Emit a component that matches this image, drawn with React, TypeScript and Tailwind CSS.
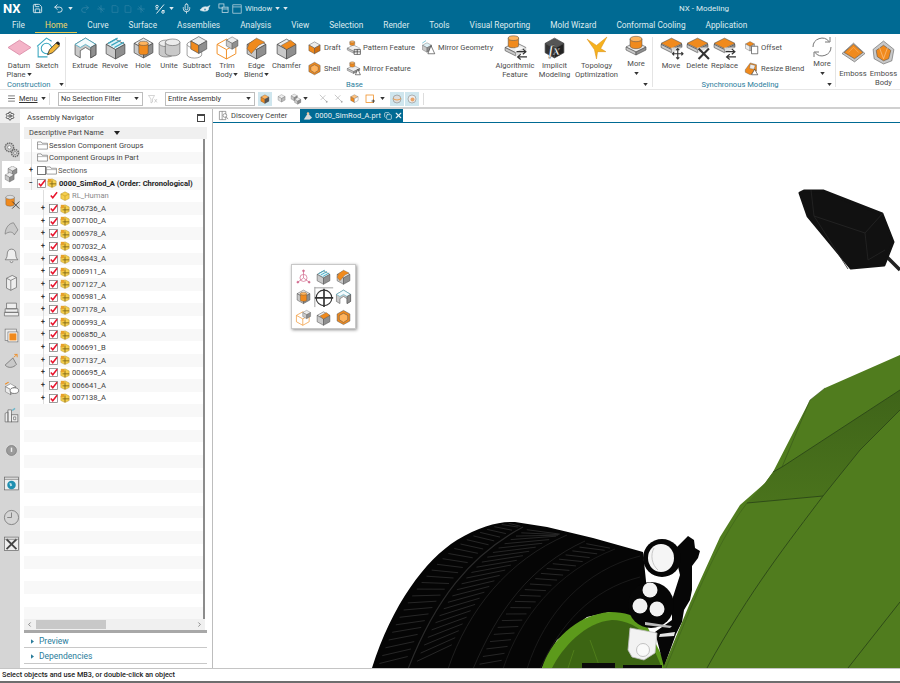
import type { ReactNode } from 'react';
import { Save, Undo2, Redo2, Mic, Menu, Settings, X, Copy, ChevronLeft, ChevronRight } from 'lucide-react';

const O = '#f08a1d';
const G = '#c9c9c9';
const D = '#8f8f8f';
const L = '#ececec';
const E = '#4a4a4a';

// little iso primitives, all in a 24 box
const Cube = ({ t = L, l = G, r = D, x = 0, y = 0, s = 1 }: { t?: string; l?: string; r?: string; x?: number; y?: number; s?: number }) => (
    <g transform={`translate(${x} ${y}) scale(${s})`} stroke={E} strokeWidth={0.7} strokeLinejoin="round">
        <polygon points="12,3 21,8 12,13 3,8" fill={t} />
        <polygon points="3,8 12,13 12,22 3,17" fill={l} />
        <polygon points="12,13 21,8 21,17 12,22" fill={r} />
    </g>
);

const Cyl = ({ cx = 12, cy = 6, rx = 5, h = 6, fill = O, top = '#ffb35c' }: { cx?: number; cy?: number; rx?: number; h?: number; fill?: string; top?: string }) => (
    <g stroke={E} strokeWidth={0.5}>
        <path d={`M${cx - rx} ${cy}v${h}a${rx} ${rx * 0.45} 0 0 0 ${rx * 2} 0v${-h}z`} fill={fill} />
        <ellipse cx={cx} cy={cy} rx={rx} ry={rx * 0.45} fill={top} />
    </g>
);

const Slab = ({ y = 12 }: { y?: number }) => (
    <g stroke={E} strokeWidth={0.6}>
        <polygon points={`12,${y - 4} 22,${y + 1} 12,${y + 6} 2,${y + 1}`} fill={L} />
        <polygon points={`2,${y + 1} 12,${y + 6} 12,${y + 9} 2,${y + 4}`} fill={G} />
        <polygon points={`22,${y + 1} 12,${y + 6} 12,${y + 9} 22,${y + 4}`} fill={D} />
    </g>
);

const Badge = ({ kind }: { kind: 'move' | 'x' | 'swap' | 'plus' }) => (
    <g transform="translate(13 13)" stroke="#333" strokeWidth={1.1} fill="none">
        <rect x={-1} y={-1} width={12} height={12} fill="#fff" stroke="none" opacity={0.7} />
        {kind === 'move' && <path d="M5 0v10M0 5h10M3.5 1.5 5 0l1.5 1.5M3.5 8.5 5 10l1.5-1.5M1.5 3.5 0 5l1.5 1.5M8.5 3.5 10 5 8.5 6.5" />}
        {kind === 'x' && <path d="M0 0 10 10M10 0 0 10" strokeWidth={2} />}
        {kind === 'swap' && <path d="M0 3h9M6 0.5 9 3 6 5.5M10 8H1M4 5.5 1 8l3 2.500" />}
        {kind === 'plus' && <path d="M0 2h10v8H0zM5 2v8M0 6h10" />}
    </g>
);

const shapes: Record<string, ReactNode> = {
    datum: <polygon points="1,12 12,5 23,12 12,19" fill="#f4b4c8" stroke="#d987a3" strokeWidth={0.8} />,
    sketch: (
        <g fill="none">
            <path d="M2 11 11 3l5 3M3 11v10h9" stroke="#39a6bf" strokeWidth={1} />
            <circle cx={11} cy={13} r={5} stroke="#39a6bf" strokeWidth={1} />
            <path d="m12 19 2-5 7-7 3 3-7 7z" fill="#f2b63a" stroke="#333" strokeWidth={0.8} />
            <path d="m20 8 2-2 2 2-1 2z" fill="#222" />
        </g>
    ),
    extrude: (
        <g stroke={E} strokeWidth={0.7} strokeLinejoin="round">
            <polygon points="2,9 12,3 22,9 22,19 17,22 17,15 12,12 7,15 7,22 2,19" fill={G} />
            <path d="M2 9 12 3 22 9 17 12 12 9 7 12Z" fill="#f4fbfd" stroke="#3aa6bf" />
            <polygon points="17,12 22,9 22,19 17,22" fill={D} />
        </g>
    ),
    revolve: (
        <g>
            <Cube t="#dff2f7" y={1} />
            <path d="M5 8 14 3M8 10 17 5M11 12 20 7" stroke="#3aa6bf" strokeWidth={1.2} />
        </g>
    ),
    hole: (
        <g>
            <Cube />
            <Cyl cy={8} rx={4.500} h={9} />
        </g>
    ),
    unite: (
        <g>
            <Cyl cx={9} cy={8} rx={7} h={10} fill={G} top={L} />
            <Cyl cx={15} cy={7} rx={7} h={10} fill={G} top={L} />
        </g>
    ),
    subtract: (
        <g>
            <Cyl cx={9} cy={9} rx={7} h={10} fill="#fff" top="#fff" />
            <Cube t={L} l={O} r={D} x={3} y={-1} s={0.85} />
        </g>
    ),
    trim: (
        <g>
            <path d="M2 9 11 4l9 5v9l-9 5-9-5zM2 9l9 5 9-5M11 14v9" stroke={O} strokeWidth={0.9} fill="none" />
            <Cube x={9} y={0} s={0.62} />
        </g>
    ),
    blend: (
        <g>
            <Cube r={D} l={G} t={L} y={1} />
            <path d="M3 13 5 8l7-5 8 4-6 3-7 8z" fill={O} stroke={E} strokeWidth={0.4} />
        </g>
    ),
    chamfer: (
        <g>
            <Cube y={1} />
            <polygon points="12,14 21,9 16,5 7,10" fill={O} stroke={E} strokeWidth={0.4} />
        </g>
    ),
    draft: <Cube t={L} l={O} r="#d06f10" />,
    shell: (
        <g stroke={E} strokeWidth={0.7}>
            <polygon points="12,2 21,7 21,17 12,22 3,17 3,7" fill={O} />
            <polygon points="12,6 18,9 18,15 12,19 6,15 6,9" fill="#ffb35c" />
        </g>
    ),
    pattern: (
        <g>
            <Slab y={12} />
            <Cyl cx={10} cy={3} rx={4} h={4} />
            <Badge kind="plus" />
        </g>
    ),
    mirrorF: (
        <g>
            <Slab y={11} />
            <Cyl cx={10} cy={3} rx={4} h={5} />
            <path d="M15 22l4-9 4 9z" fill="#fff" stroke="#333" strokeWidth={1} />
        </g>
    ),
    mirrorG: (
        <g>
            <Cube t="#dff2f7" s={0.8} y={2} />
            <path d="M11 22l5-13 6 13z" fill="#fff" stroke="#333" strokeWidth={1} />
            <path d="M2 5 8 1" stroke="#3aa6bf" strokeWidth={1} />
        </g>
    ),
    algo: (
        <g>
            <Slab y={11} />
            <Cyl cx={10} cy={3} rx={5} h={7} />
            <Badge kind="swap" />
        </g>
    ),
    implicit: (
        <g>
            <Cube t="#555" l="#333" r="#222" />
            <text x={12} y={19} textAnchor="middle" fontFamily="Liberation Serif, serif" fontStyle="italic" fontWeight={700} fontSize={13} fill="#fff" stroke="#000" strokeWidth={0.3}>
                fx
            </text>
        </g>
    ),
    topo: <path d="M3 4 12 10 22 2 16 13 21 16 13 16 12 23 10 14Z" fill="#f6b21d" stroke="#d98c12" strokeWidth={0.5} />,
    more: (
        <g>
            <Slab y={11} />
            <Cyl cx={12} cy={4} rx={6} h={7} />
        </g>
    ),
    move: (
        <g>
            <Slab y={8} />
            <polygon points="12,3 22,8 12,13 2,8" fill={O} stroke={E} strokeWidth={0.5} />
            <Badge kind="move" />
        </g>
    ),
    del: (
        <g>
            <Slab y={8} />
            <polygon points="12,3 22,8 12,13 2,8" fill={O} stroke={E} strokeWidth={0.5} />
            <Badge kind="x" />
        </g>
    ),
    replace: (
        <g>
            <Slab y={8} />
            <polygon points="12,3 22,8 12,13 2,8" fill={O} stroke={E} strokeWidth={0.5} />
            <Badge kind="swap" />
        </g>
    ),
    offset: (
        <g>
            <Cube t={O} l={L} r={G} s={0.8} />
            <path d="M12 10h10v12H12z" fill="#fff" stroke="#333" strokeWidth={1} />
        </g>
    ),
    resize: (
        <g>
            <polygon points="2,14 10,3 20,6 20,16 10,22 2,18" fill={O} stroke={E} strokeWidth={0.6} />
            <polygon points="10,5 18,7 16,13 9,12" fill={L} stroke={E} strokeWidth={0.5} />
            <path d="M12 22l5-9 5 9z" fill="#fff" stroke="#333" strokeWidth={1} />
        </g>
    ),
    sync: (
        <g fill="none" stroke="#777" strokeWidth={1}>
            <path d="M3 12a9 9 0 0 1 16-5.500M21 12a9 9 0 0 1-16 5.500" />
            <path d="M20 2v5h-5M4 22v-5h5" />
        </g>
    ),
    emboss: (
        <g stroke={E} strokeWidth={0.5}>
            <polygon points="1,13 12,3 23,13 13,21" fill={G} />
            <polygon points="3,12 12,4 21,12 13,18" fill={O} />
            <path d="M7 12 12 7l5 5" stroke="#ffc27e" fill="none" />
        </g>
    ),
    embossB: (
        <g stroke={E} strokeWidth={0.5}>
            <polygon points="12,1 22,9 20,20 12,23 3,18 2,9" fill={G} />
            <polygon points="12,5 19,10 17,18 12,20 6,16 5,10" fill={O} />
            <path d="M8 7l4 11 4-11" stroke="#ffd9ae" fill="none" />
        </g>
    ),
    tripod: (
        <g fill="none" stroke="#d26a8e" strokeWidth={1}>
            <circle cx={12} cy={14} r={5} />
            <path d="M12 14V4M12 14l-8 6M12 14l8 6" />
            <circle cx={12} cy={4} r={1.300} fill="#d26a8e" />
            <circle cx={4} cy={20} r={1.300} fill="#d26a8e" />
            <circle cx={20} cy={20} r={1.300} fill="#d26a8e" />
        </g>
    ),
    target: (
        <g fill="none" stroke="#333">
            <path d="M2 1v22M2 2h20" stroke="#999" strokeWidth={1} />
            <circle cx={12} cy={13} r={8.500} strokeWidth={1.200} />
            <path d="M12 3v20M2 13h20" strokeWidth={1.800} />
        </g>
    ),
    gears: (
        <g fill={G} stroke="#666" strokeWidth={0.9}>
            <circle cx={9} cy={9} r={6} strokeDasharray="2 1" strokeWidth={2} />
            <circle cx={9} cy={9} r={2.500} fill="#fff" />
            <circle cx={17} cy={17} r={5} strokeDasharray="2 1" strokeWidth={2} />
            <circle cx={17} cy={17} r={2} fill="#fff" />
        </g>
    ),
    part: (
        <g>
            <Cube t={L} l={G} r={D} x={5} y={-2} s={0.7} />
            <Cube t={L} l={G} r={D} x={1} y={7} s={0.7} />
        </g>
    ),
    partX: (
        <g>
            <Cyl cx={10} cy={6} rx={6} h={10} fill={O} top="#ddd" />
            <path d="M13 12 23 22M23 12 13 22" stroke="#333" strokeWidth={1.200} />
        </g>
    ),
    surface: <path d="M3 20c0-9 6-16 12-16l6 10-5 7c-2-5-8-5-13-1z" fill={G} stroke="#666" strokeWidth={0.8} />,
    bell: <path d="M12 3c-4 0-6 3-6 7 0 5-2 7-3 8h18c-1-1-3-3-3-8 0-4-2-7-6-7zM10 20a2 2 0 0 0 4 0" fill="#eee" stroke="#666" strokeWidth={1} />,
    book: <path d="M5 6l8-4 6 3v14l-8 4-6-3zM5 6l6 3v14M11 9l8-4" fill="#eee" stroke="#666" strokeWidth={1} />,
    printer: <path d="M5 3h14v8H5zM3 11h18v5H3zM2 16h20v5H2z" fill="#eee" stroke="#666" strokeWidth={1} />,
    layer: (
        <g>
            <rect x={3} y={3} width={16} height={16} fill="#eee" stroke="#777" />
            <rect x={7} y={7} width={14} height={14} fill="#fff" stroke="#777" />
            <rect x={9} y={9} width={10} height={10} fill={O} />
        </g>
    ),
    cone: (
        <g>
            <path d="M3 17 14 7l5 9c-4 5-12 6-16 1z" fill={G} stroke="#666" />
            <path d="M15 6l5-4M20 2v4M20 2h-4" stroke={O} strokeWidth={1.200} fill="none" />
        </g>
    ),
    eyeCube: (
        <g>
            <Cube t="#fff" l={L} r={G} x={1} y={3} s={0.8} />
            <ellipse cx={16} cy={15} rx={6} ry={4} fill="#fff" stroke="#555" />
            <path d="M3 6l5-3" stroke={O} strokeWidth={1.500} />
        </g>
    ),
    house: (
        <g fill="#eee" stroke="#666" strokeWidth={1}>
            <path d="M3 21V9l4-2v14zM7 21V4h5v17z" />
            <rect x={12} y={11} width={9} height={10} />
            <path d="M15 14h3v4h-3z" fill="#fff" />
            <path d="M13 5l4-3" stroke="#6ab7cc" strokeWidth={2} />
        </g>
    ),
    radar: (
        <g>
            <circle cx={12} cy={12} r={7} fill="#9b9b9b" stroke="#777" />
            <path d="M12 8v6" stroke="#eee" strokeWidth={2} />
            <path d="M7 3a12 12 0 0 1 12 3" fill="none" stroke="#ddd" />
        </g>
    ),
    globe: (
        <g>
            <rect x={2} y={3} width={20} height={18} fill="#eee" stroke="#666" />
            <path d="M2 6h20" stroke="#666" />
            <circle cx={12} cy={14} r={6} fill="#1f8fb0" />
            <path d="M9 11l3 1 1 3-3 1z" fill="#b8e0ea" />
        </g>
    ),
    clock: (
        <g fill="none" stroke="#777" strokeWidth={1.200}>
            <circle cx={12} cy={12} r={10} />
            <path d="M12 5v7H6" />
        </g>
    ),
    tools: (
        <g>
            <rect x={2} y={3} width={20} height={19} fill="#eee" stroke="#666" />
            <path d="M5 6 19 20M19 6 5 20" stroke="#444" strokeWidth={2.500} />
            <path d="M2 6h20" stroke="#666" />
        </g>
    ),
    filter: <path d="M3 5h12l-4 7v6l-3 2v-8zM15 12l5 7M20 12l-5 7" fill="none" stroke="#aaa" strokeWidth={1} />,
    select: <Cube t="#ffb35c" l={O} r="#555" s={0.9} x={1} y={1} />,
    faint: <Cube t="#eee" l="#ddd" r="#bbb" s={0.85} x={2} y={1} />,
    faintX: (
        <g fill="none" stroke="#c4c4c4" strokeWidth={2}>
            <path d="M4 4 18 18M16 5 6 15" />
            <circle cx={19} cy={19} r={2} fill="#aaa" stroke="none" />
        </g>
    ),
    stack: (
        <g>
            <Cube t="#eee" l={G} r={D} s={0.7} x={0} y={0} />
            <Cube t="#eee" l={G} r={D} s={0.7} x={7} y={7} />
        </g>
    ),
    orangeC: <Cube t="#ffc27e" l={O} r="#fff" s={0.9} x={1} y={1} />,
    square: (
        <g>
            <rect x={4} y={4} width={15} height={15} fill="#fff" stroke={O} strokeWidth={1.500} />
            <path d="M15 16h7M18.500 13v7" stroke="#333" strokeWidth={1.600} />
        </g>
    ),
    sphere: (
        <g>
            <circle cx={12} cy={12} r={8} fill="#ddd" stroke="#777" />
            <path d="M4 11c5 4 11 4 16 0" fill="none" stroke={O} strokeWidth={1.500} />
        </g>
    ),
    sphere2: (
        <g>
            <circle cx={12} cy={12} r={8} fill="#eee" stroke="#777" />
            <circle cx={13} cy={13} r={4} fill="#e9a469" />
        </g>
    ),
    eye: <path d="M2 14c4-6 10-8 14-6l6-3-3 5c1 3-1 6-5 6-5 1-9 0-12-2zM12 11a2 2 0 1 0 .1 0z" fill="#dfeaef" stroke="#dfeaef" fillRule="evenodd" />,
    percent: (
        <g fill="none" stroke="#dfeaef" strokeWidth={2}>
            <path d="M5 21 20 3M3 12h5M16 15h5" />
            <circle cx={6} cy={7} r={2.500} />
            <circle cx={18} cy={18} r={2.500} />
        </g>
    ),
    ghostBox: <path d="M5 4h10l4 4v12H5z" fill="none" stroke="#2f83a6" strokeWidth={1.600} />,
    ghostPlus: <path d="M12 3v18M3 12h18M6 6l12 12" stroke="#2f83a6" strokeWidth={1.800} fill="none" />,
    windows: (
        <g fill="none" stroke="#dfeaef" strokeWidth={1.500}>
            <rect x={2} y={2} width={11} height={9} />
            <rect x={9} y={9} width={13} height={12} fill="#006a93" />
            <path d="M9 13h13" />
        </g>
    ),
    window: (
        <g fill="none" stroke="#dfeaef" strokeWidth={1.500}>
            <rect x={2} y={2} width={20} height={20} />
            <path d="M2 7h20" />
        </g>
    ),
    discovery: (
        <g fill="none" stroke="#666" strokeWidth={1.300}>
            <path d="M3 3h14v18H3zM9 3v18" />
            <circle cx={15} cy={12} r={4} fill="#fff" />
            <path d="M18 15l4 5" />
        </g>
    ),
    tabPart: (
        <g>
            <path d="M3 20 12 6l9 10-5 4z" fill="#d8d8d8" stroke="#fff" />
            <circle cx={12} cy={6} r={3} fill="#f3c69a" />
        </g>
    ),
};

const Ico = ({ n, className = 'w-6 h-6' }: { n: string; className?: string }) => (
    <svg viewBox="0 0 24 24" className={`${className} shrink-0`}>
        {shapes[n]}
    </svg>
);

const Caret = ({ color = '#333', className = '' }: { color?: string; className?: string }) => (
    <svg viewBox="0 0 6 4" className={`w-[5px] h-[3px] shrink-0 ${className}`}>
        <path d="M0 0h6L3 4z" fill={color} />
    </svg>
);

const Big = ({ n, lines, w, caret, low }: { n: string; lines: string[]; w: string; caret?: boolean; low?: boolean }) => (
    <div className={`${w} flex flex-col items-center shrink-0 ${low ? 'pt-[6px]' : 'pt-[1px]'}`}>
        <Ico n={n} className="w-[25px] h-[25px]" />
        <div className={`${low ? 'mt-[5px]' : 'mt-[2px]'} text-center leading-[8.500px] whitespace-nowrap`}>
            {lines.map((l, i) => (
                <div key={l} className="flex items-center justify-center gap-[1px]">
                    {l}
                    {caret && i === lines.length - 1 && <Caret />}
                </div>
            ))}
        </div>
    </div>
);

const More = ({ n, w }: { n: string; w: string }) => (
    <div className={`${w} flex flex-col items-center pt-[1px] shrink-0`}>
        <Ico n={n} className="w-[24px] h-[24px]" />
        <div className="leading-[8.500px] mt-[1px]">More</div>
        <Caret className="mt-[3px]" />
    </div>
);

const Small = ({ n, label }: { n: string; label: string }) => (
    <div className="flex items-center gap-[2px] h-[15px] whitespace-nowrap">
        <Ico n={n} className="w-[15px] h-[15px]" />
        {label}
    </div>
);

const Sep = () => <div className="w-px h-[50px] mt-[3px] bg-[#e4e4e4] shrink-0" />;

const GroupLabel = ({ text, className = '' }: { text: string; className?: string }) => (
    <div className={`h-[10px] pt-[1px] flex items-center justify-center text-[#2b7d9c] leading-none ${className}`}>
        {text}
    </div>
);

const Ribbon = () => (
    <div className="h-[55px] flex bg-white text-[7.600px] text-[#4c4c4c]">
        <div className="w-[65px] shrink-0 flex flex-col">
            <div className="h-[45px] flex pl-[5px]">
                <Big n="datum" lines={['Datum', 'Plane']} w="w-[28px]" caret />
                <Big n="sketch" lines={['Sketch']} w="w-[28px]" />
            </div>
            <div className="flex items-center pl-[7px] gap-[9px]">
                <GroupLabel text="Construction" />
                <Caret />
            </div>
        </div>
        <Sep />
        <div className="w-[586px] shrink-0 flex flex-col">
            <div className="h-[45px] flex pl-[4px]">
                <Big n="extrude" lines={['Extrude']} w="w-[30px]" />
                <Big n="revolve" lines={['Revolve']} w="w-[30px]" />
                <Big n="hole" lines={['Hole']} w="w-[26px]" />
                <Big n="unite" lines={['Unite']} w="w-[26px]" />
                <Big n="subtract" lines={['Subtract']} w="w-[30px]" />
                <Big n="trim" lines={['Trim', 'Body']} w="w-[30px]" caret />
                <Big n="blend" lines={['Edge', 'Blend']} w="w-[29px]" caret />
                <Big n="chamfer" lines={['Chamfer']} w="w-[31px]" />
                <div className="w-[44px] shrink-0 pl-[5px] pt-[6px] flex flex-col gap-[6px]">
                    <Small n="draft" label="Draft" />
                    <Small n="shell" label="Shell" />
                </div>
                <div className="w-[75px] shrink-0 pt-[6px] flex flex-col gap-[6px]">
                    <Small n="pattern" label="Pattern Feature" />
                    <Small n="mirrorF" label="Mirror Feature" />
                </div>
                <div className="w-[73px] shrink-0 pt-[6px]">
                    <Small n="mirrorG" label="Mirror Geometry" />
                </div>
                <Big n="algo" lines={['Algorithmic', 'Feature']} w="w-[42px]" />
                <Big n="implicit" lines={['Implicit', 'Modeling']} w="w-[37px]" />
                <Big n="topo" lines={['Topology', 'Optimization']} w="w-[47px]" />
                <More n="more" w="w-[32px]" />
            </div>
            <div className="flex items-center">
                <GroupLabel text="Base" className="w-[577px]" />
                <Caret />
            </div>
        </div>
        <Sep />
        <div className="w-[182px] shrink-0 flex flex-col">
            <div className="h-[45px] flex pl-[5px]">
                <Big n="move" lines={['Move']} w="w-[26px]" />
                <Big n="del" lines={['Delete']} w="w-[26px]" />
                <Big n="replace" lines={['Replace']} w="w-[29px]" />
                <div className="w-[71px] shrink-0 pl-[5px] pt-[6px] flex flex-col gap-[6px]">
                    <Small n="offset" label="Offset" />
                    <Small n="resize" label="Resize Blend" />
                </div>
                <More n="sync" w="w-[24px]" />
            </div>
            <div className="flex items-center">
                <GroupLabel text="Synchronous Modeling" className="w-[174px]" />
                <Caret />
            </div>
        </div>
        <Sep />
        <div className="flex pl-[2px]">
            <Big n="emboss" lines={['Emboss']} w="w-[30px]" low />
            <Big n="embossB" lines={['Emboss', 'Body']} w="w-[31px]" low />
        </div>
    </div>
);

const menuTabs = ['File', 'Home', 'Curve', 'Surface', 'Assemblies', 'Analysis', 'View', 'Selection', 'Render', 'Tools', 'Visual Reporting', 'Mold Wizard', 'Conformal Cooling', 'Application'];

const TitleBar = () => (
    <div className="bg-[#006a93] text-[#dfeaef]">
        <div className="h-[17px] flex items-center relative">
            <span className="ml-[3px] w-[27px] text-[13px] font-bold text-white leading-none">NX</span>
            <Save size={11} className="ml-[2px]" />
            <Undo2 size={11} className="ml-[10px]" />
            <Caret color="#dfeaef" className="ml-[4px]" />
            <Redo2 size={10} className="ml-[7px] text-[#2f83a6]" />
            <Ico n="ghostPlus" className="w-[10px] h-[10px] ml-[6px]" />
            <Ico n="ghostBox" className="w-[10px] h-[10px] ml-[4px]" />
            <Ico n="ghostBox" className="w-[10px] h-[10px] ml-[3px]" />
            <Ico n="ghostPlus" className="w-[10px] h-[10px] ml-[3px]" />
            <Ico n="percent" className="w-[12px] h-[12px] ml-[8px]" />
            <Caret color="#dfeaef" className="ml-[3px]" />
            <Mic size={11} className="ml-[7px]" />
            <Ico n="eye" className="w-[12px] h-[12px] ml-[7px]" />
            <Ico n="windows" className="w-[11px] h-[11px] ml-[7px]" />
            <Ico n="window" className="w-[10px] h-[10px] ml-[3px]" />
            <span className="ml-[3px] text-[7.600px]">Window</span>
            <Caret color="#dfeaef" className="ml-[3px]" />
            <Caret color="#dfeaef" className="ml-[3px]" />
            <span className="absolute left-[679px] text-[8px]">NX - Modeling</span>
        </div>
        <div className="h-[17px] flex items-center gap-[20px] pl-[12px] text-[8.300px]">
            {menuTabs.map((t) =>
                t === 'Home' ? (
                    <span key={t} className="relative text-[#f3d66a]">
                        {t}
                        <span className="absolute -left-[10px] -right-[10px] top-[13px] h-px bg-[#e9c84e]" />
                    </span>
                ) : (
                    <span key={t}>{t}</span>
                ),
            )}
        </div>
    </div>
);

const Select = ({ label, w, ml }: { label: string; w: string; ml: string }) => (
    <div className={`${w} ${ml} h-[14px] border border-[#bdbdbd] bg-white flex items-center justify-between pl-[2px] pr-[3px]`}>
        {label}
        <Caret />
    </div>
);

const Toolbar = () => (
    <div className="h-[17px] bg-white flex items-center text-[7.400px] text-[#333]">
        <div className="w-[49px] shrink-0 flex items-center">
            <Menu size={9} className="ml-[7px] text-[#555]" />
            <span className="ml-[3px] underline underline-offset-1">Menu</span>
            <Caret className="ml-[3px]" />
        </div>
        <div className="w-px h-[12px] bg-[#ddd]" />
        <Select label="No Selection Filter" w="w-[85px]" ml="ml-[8px]" />
        <Ico n="filter" className="w-[12px] h-[12px] ml-[4px]" />
        <Select label="Entire Assembly" w="w-[90px]" ml="ml-[6px]" />
        <div className="ml-[3px] w-[14px] h-[14px] bg-[#cfe6ee] flex items-center justify-center">
            <Ico n="select" className="w-[12px] h-[12px]" />
        </div>
        <Ico n="faint" className="w-[11px] h-[11px] ml-[4px]" />
        <Ico n="stack" className="w-[12px] h-[12px] ml-[3px]" />
        <Caret className="ml-[1px]" />
        <Ico n="faintX" className="w-[11px] h-[11px] ml-[10px]" />
        <Ico n="faintX" className="w-[11px] h-[11px] ml-[4px]" />
        <Ico n="orangeC" className="w-[11px] h-[11px] ml-[5px]" />
        <Ico n="square" className="w-[12px] h-[12px] ml-[4px]" />
        <Caret className="ml-[4px]" />
        <div className="ml-[5px] w-[14px] h-[14px] bg-[#cfe6ee] flex items-center justify-center">
            <Ico n="sphere" className="w-[12px] h-[12px]" />
        </div>
        <div className="ml-[1px] w-[14px] h-[14px] bg-[#cfe6ee] flex items-center justify-center">
            <Ico n="sphere2" className="w-[12px] h-[12px]" />
        </div>
        <div className="w-px h-[12px] bg-[#ddd] ml-[4px]" />
    </div>
);

const stripItems = [
    { n: 'gears', c: 'h-[24px]' },
    { n: 'part', c: 'h-[27px] bg-white' },
    { n: 'partX', c: 'h-[27px]' },
    { n: 'surface', c: 'h-[27px]' },
    { n: 'bell', c: 'h-[27px]' },
    { n: 'book', c: 'h-[27px]' },
    { n: 'printer', c: 'h-[26px]' },
    { n: 'layer', c: 'h-[26px]' },
    { n: 'cone', c: 'h-[27px]' },
    { n: 'eyeCube', c: 'h-[27px]' },
    { n: 'house', c: 'h-[27px]' },
    { n: 'radar', c: 'h-[42px]' },
    { n: 'globe', c: 'h-[24px]' },
    { n: 'clock', c: 'h-[26px] mt-[9px]' },
    { n: 'tools', c: 'h-[26px]' },
];

const Strip = () => (
    <div className="w-[20px] shrink-0 bg-[#d5d5d5] flex flex-col">
        <div className="h-[14px] bg-[#eeeeee] flex items-center justify-center">
            <Settings size={10} className="text-[#333]" />
        </div>
        <div className="h-[14px]" />
        {stripItems.map((s) => (
            <div key={s.n} className={`${s.c} ml-[2px] flex items-center justify-center`}>
                <Ico n={s.n} className="w-[17px] h-[17px]" />
            </div>
        ))}
    </div>
);

const CheckBox = ({ box = true }: { box?: boolean }) => (
    <svg viewBox="0 0 10 10" className="w-[9px] h-[9px] shrink-0">
        {box && <rect x={0.5} y={0.5} width={9} height={9} fill="#fff" stroke="#777" strokeWidth={0.8} />}
        <path d="M2 5l2.200 2.500L9 1.500" fill="none" stroke="#e8142c" strokeWidth={1.700} />
    </svg>
);

const Asm = ({ single }: { single?: boolean }) => (
    <svg viewBox="0 0 12 12" className="w-[10px] h-[10px] shrink-0 block">
        <polygon points="6,1 11,3.500 11,9 6,11.500 1,9 1,3.500" fill="#f6cf4d" stroke="#a8841c" strokeWidth={0.5} />
        {single ? <path d="M1 3.500l5 2.500 5-2.500M6 6v5" fill="none" stroke="#a8841c" strokeWidth={0.5} /> : <path d="M6 3v8M3 7h8" stroke="#7a6212" strokeWidth={1} />}
        {!single && <rect x={1} y={1} width={4} height={4} fill="#e8a22a" />}
    </svg>
);

const Folder = () => (
    <svg viewBox="0 0 12 10" className="w-[11px] h-[9px] shrink-0">
        <path d="M.5 9V1h4l1 1.500h6V9z" fill="#fff" stroke="#666" strokeWidth={0.7} />
        <path d="M.5 4h11" stroke="#666" strokeWidth={0.5} />
    </svg>
);

const Guide = ({ sign }: { sign?: string }) => (
    <div className="relative w-[12px] h-full shrink-0 flex justify-center">
        <div className="w-px h-full bg-[#dedede]" />
        {sign && <span className="absolute inset-0 flex items-center justify-center text-[7px] leading-none text-[#333] font-bold">{sign}</span>}
    </div>
);

const parts = ['006736_A', '007100_A', '006978_A', '007032_A', '006843_A', '006911_A', '007127_A', '006981_A', '007178_A', '006993_A', '006850_A', '006691_B', '007137_A', '006695_A', '006641_A', '007138_A'];

const Tree = () => {
    const rows: ReactNode[] = [
        <>
            <Guide />
            <Folder />
            <span className="ml-[1px]">Session Component Groups</span>
        </>,
        <>
            <Guide />
            <Folder />
            <span className="ml-[1px]">Component Groups in Part</span>
        </>,
        <>
            <Guide sign="+" />
            <span className="w-[9px] h-[9px] border border-[#777] bg-white" />
            <Folder />
            <span className="ml-[1px] text-[#555]">Sections</span>
        </>,
        <>
            <Guide sign="−" />
            <CheckBox />
            <span className="ml-[1px]"><Asm /></span>
            <span className="ml-[2px] font-bold text-[#222] whitespace-nowrap">0000_SimRod_A (Order: Chronological)</span>
        </>,
        <>
            <div className="w-[12px] shrink-0" />
            <Guide />
            <CheckBox box={false} />
            <span className="ml-[2px]"><Asm single /></span>
            <span className="ml-[2px] text-[#8a8a8a]">RL_Human</span>
        </>,
        ...parts.map((p) => (
            <>
                <div className="w-[12px] shrink-0" />
                <Guide sign="+" />
                <CheckBox />
                <span className="ml-[2px]"><Asm /></span>
                <span className="ml-[2px]">{p}</span>
            </>
        )),
    ];
    for (let i = rows.length; i < 38; i++) rows.push(null);
    return (
        <div className="flex-1 overflow-hidden flex flex-col">
            {rows.map((r, i) => (
                <div key={i} className={`h-[12.650px] shrink-0 flex items-center pl-[1px] text-[7.600px] text-[#444] ${i % 2 ? 'bg-[#f8f8f8]' : 'bg-white'}`}>
                    {r}
                </div>
            ))}
        </div>
    );
};

const Accordion = ({ label, h }: { label: string; h: string }) => (
    <div className={`${h} flex items-center gap-[5px] pl-[7px] border-b border-[#c8c8c8] text-[8.500px] text-[#2b7d9c]`}>
        <svg viewBox="0 0 4 6" className="w-[3px] h-[5px]">
            <path d="M0 0l4 3-4 3z" fill="#2b7d9c" />
        </svg>
        {label}
    </div>
);

const Navigator = () => (
    <div className="w-[193px] shrink-0 border-r border-[#bdbdbd] flex flex-col pl-[4px] pr-[5px] bg-white">
        <div className="h-[18px] shrink-0 flex items-center justify-between pl-[3px] pr-[2px] pb-[1px] text-[7.500px] text-[#444]">
            Assembly Navigator
            <span className="w-[8px] h-[8px] border border-[#444] border-t-2" />
        </div>
        <div className="h-[12px] shrink-0 bg-[#f0f0f0] flex items-center pl-[5px] text-[7.500px] text-[#444]">
            Descriptive Part Name
            <Caret color="#222" className="ml-[10px] w-[6px] h-[4px]" />
        </div>
        <div className="h-[480px] shrink-0 flex">
            <Tree />
            <div className="w-[2px] bg-[#8c8c8c] shrink-0" />
            <div className="w-[2px] shrink-0" />
        </div>
        <div className="h-[11px] shrink-0 bg-[#f0f0f0] flex items-center justify-between mr-[2px]">
            <ChevronLeft size={7} className="ml-[2px] text-[#444]" />
            <div className="w-[70px] h-[9px] bg-[#c8c8c8] -ml-[88px]" />
            <ChevronRight size={7} className="mr-[2px] text-[#444]" />
        </div>
        <div className="h-[3px] shrink-0 bg-[#a8a8a8]" />
        <Accordion label="Preview" h="h-[15px] pt-[2px]" />
        <Accordion label="Dependencies" h="h-[16px] pt-[1px]" />
    </div>
);

const TabRow = () => (
    <div className="h-[14px] shrink-0 flex items-stretch border-b border-[#006a93] text-[7.500px]">
        <div className="ml-[2px] w-[85px] flex items-center gap-[2px] pl-[3px] text-[#444]">
            <Ico n="discovery" className="w-[11px] h-[11px]" />
            Discovery Center
        </div>
        <div className="w-[103px] bg-[#006a93] flex items-center pl-[3px] gap-[2px] text-[#e8f1f4] whitespace-nowrap">
            <Ico n="tabPart" className="w-[10px] h-[10px]" />
            0000_SimRod_A.prt
            <Copy size={8} className="ml-[1px] shrink-0" />
            <X size={9} strokeWidth={3} className="shrink-0" />
        </div>
    </div>
);

// cubic bezier through tread curves, coordinates are screen pixels
type Pt = [number, number];
const bez = (c: Pt[], t: number): Pt => {
    const u = 1 - t;
    const a = u * u * u, b = 3 * u * u * t, d = 3 * u * t * t, e = t * t * t;
    return [a * c[0][0] + b * c[1][0] + d * c[2][0] + e * c[3][0], a * c[0][1] + b * c[1][1] + d * c[2][1] + e * c[3][1]];
};
const curvePath = (c: Pt[]) => `M${c[0][0]} ${c[0][1]}C${c[1][0]} ${c[1][1]} ${c[2][0]} ${c[2][1]} ${c[3][0]} ${c[3][1]}`;

const edge: Pt[] = [[372, 669], [395, 600], [440, 530], [510, 522]];
const g1: Pt[] = [[408, 669], [435, 600], [470, 555], [523, 527]];
const g2: Pt[] = [[448, 669], [468, 610], [508, 560], [567, 535]];
const g3: Pt[] = [[473, 669], [498, 610], [530, 566], [585, 541]];
const g4: Pt[] = [[503, 669], [520, 618], [556, 572], [615, 549]];
const side1: Pt[] = [[527, 669], [545, 612], [585, 570], [640, 556]];
const side2: Pt[] = [[540, 669], [560, 625], [590, 590], [640, 577]];

const sipes = (a: Pt[], b: Pt[], n: number, skew: number) => {
    let d = '';
    for (let i = 0; i < n; i++) {
        const t = (i + 0.5) / n;
        const p = bez(a, t);
        const q = bez(b, Math.min(1, Math.max(0, t + skew)));
        const sx = p[0] + (q[0] - p[0]) * 0.15, sy = p[1] + (q[1] - p[1]) * 0.15;
        const ex = p[0] + (q[0] - p[0]) * 0.85, ey = p[1] + (q[1] - p[1]) * 0.85;
        d += `M${sx.toFixed(1)} ${sy.toFixed(1)}L${ex.toFixed(1)} ${ey.toFixed(1)}`;
    }
    return d;
};

const Scene = () => (
    <svg viewBox="213 123 687 545" className="w-full h-full block">
        <defs>
            <linearGradient id="facet" x1="0" y1="0" x2="0" y2="1">
                <stop offset="0" stopColor="#3f6419" />
                <stop offset="1" stopColor="#4a731c" />
            </linearGradient>
        </defs>

        {/* antenna */}
        <path d="M887 257 900 270" stroke="#222" strokeWidth={3.500} />
        <polygon points="800,193 804,191 823,191 882,214 893,242 884,265 851,268 808,216" fill="#111" stroke="#111" strokeWidth={3} strokeLinejoin="round" />
        <path d="M811 190 814 216 848 269M814 216 865 233 883 213M865 233 868 260 885 250" stroke="#262626" fill="none" strokeWidth={0.8} />

        {/* tire */}
        <path d="M372 668 C392 605 425 560 457 540 C480 526 500 521 515 522 L547 527 L593 538 L643 552 L650 620 L630 625 L610 612 L587 617 L557 640 L542 668 Z" fill="#050505" />
        <path d={sipes(edge, g1, 26, 0.05)} stroke="#2a2a2a" strokeWidth={0.9} />
        <path d={sipes(g1, g2, 24, 0.14)} stroke="#2a2a2a" strokeWidth={0.9} />
        <path d={sipes(g3, g4, 22, 0.04)} stroke="#2a2a2a" strokeWidth={0.9} />
        {[g1, g2, g3, g4, side1, side2].map((c, i) => (
            <path key={i} d={curvePath(c)} fill="none" stroke={i < 3 ? '#2a2a2a' : '#222'} strokeWidth={i === 0 ? 1.200 : 0.7} />
        ))}

        {/* rim */}
        <path d="M542 668 C550 642 575 615 610 612 C625 612 635 616 645 622 L668 668 Z" fill="#5c9a1b" />
        <path d="M552 668 C562 648 585 622 612 620 C625 620 640 626 650 640 L662 668 Z" fill="#3c6513" />
        <path d="M568 668 574 650M600 668 590 640" stroke="#4f7d1a" strokeWidth={1} />
        <rect x={582} y={663} width={33} height={5} fill="#0a0a0a" />
        <rect x={623} y={665} width={39} height={3} fill="#0a0a0a" />

        {/* light pod */}
        <path d="M674 550 L688 536 L694 540 L695 548 L700 551 L698 558 L692 566 L692 590 L690 600 L684 610 L682 622 L676 634 L664 667 L655 632 L672 620 L672 600 L680 575 Z" fill="#060606" />
        <circle cx={662} cy={558} r={19} fill="#060606" />
        <circle cx={651} cy={605} r={23} fill="#060606" />
        <ellipse cx={661} cy={558} rx={13} ry={14} fill="#f5f5f5" />
        <path d="M654 548 C650 555 652 565 658 570" stroke="#c8c8c8" fill="none" />
        <circle cx={650} cy={590} r={7.500} fill="#f3f3f3" />
        <circle cx={640} cy={606} r={7.500} fill="#f3f3f3" />
        <circle cx={657} cy={609} r={7.500} fill="#f3f3f3" />
        <path d="M645 622 672 626 670 628 645 625Z" fill="#bbb" />
        <path d="M660 634 675 632 674 636 659 637Z" fill="#e5e5e5" />
        <path d="M630 628 657 633 655 653 644 660 632 657 628 650Z" fill="#f2f2f2" stroke="#bdbdbd" strokeWidth={0.8} />
        <circle cx={643} cy={650} r={6.500} fill="#fafafa" stroke="#c2c2c2" />

        {/* body */}
        <polygon points="663,668 690,603 720,537 740,505 765,483 773,472 810,400 825,388 900,355 900,668" fill="#507c1e" />
        <polygon points="747,503 765,483 773,472 782,467 900,390 900,410 860,450 823,496" fill="url(#facet)" />
        <g fill="none" stroke="#2f4c18" strokeWidth={1}>
            <path d="M747 503 823 496 C790 540 750 590 707 668" />
            <path d="M823 496 860 450 900 410" />
            <path d="M773 472 782 467 900 390" />
            <path d="M848 668 900 602" />
            <path d="M782 467 810 400 825 388" strokeOpacity={0.5} />
            <path d="M666 668 C690 610 715 545 747 503" strokeOpacity={0.35} />
        </g>
    </svg>
);

const paletteIcons = ['tripod', 'revolve', 'blend', 'hole', 'target', 'extrude', 'trim', 'chamfer', 'shell'];

const ViewPalette = () => (
    <div className="absolute left-[78px] top-[141px] w-[65px] h-[65px] bg-white border border-[#c8c8c8] shadow-[1px_1px_3px_rgba(0,0,0,0.45)] grid grid-cols-3 place-items-center p-[2px]">
        {paletteIcons.map((n, i) => (
            <Ico key={i} n={n} className={n === 'target' ? 'w-[22px] h-[22px]' : 'w-[17px] h-[17px]'} />
        ))}
    </div>
);

export default function App() {
    return (
        <div className="w-[900px] h-[683px] overflow-hidden flex flex-col bg-white" style={{ fontFamily: 'Roboto, "Noto Sans", sans-serif' }}>
            <TitleBar />
            <Ribbon />
            <div className="h-px bg-[#e6e6e6]" />
            <Toolbar />
            <div className="h-[2px] bg-[#d0d0d0]" />
            <div className="h-[559px] flex">
                <Strip />
                <Navigator />
                <div className="flex-1 flex flex-col min-w-0">
                    <TabRow />
                    <div className="flex-1 relative min-h-0">
                        <Scene />
                        <ViewPalette />
                    </div>
                </div>
            </div>
            <div className="h-[13px] border-t border-[#c4c4c4] flex items-center pl-[2px] text-[7.250px] font-medium text-[#222]">
                Select objects and use MB3, or double-click an object
            </div>
            <div className="h-[2px] bg-[#6e6e6e]" />
        </div>
    );
}
